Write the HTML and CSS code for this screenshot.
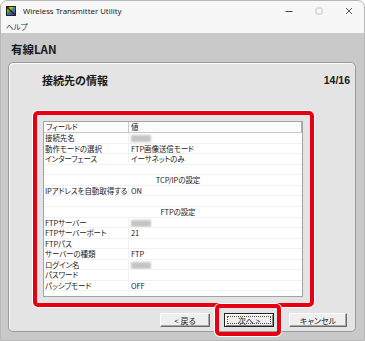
FILE: index.html
```html
<!DOCTYPE html>
<html lang="ja">
<head>
    <meta charset="UTF-8">
    <title>Wireless Transmitter Utility</title>
    <link rel="stylesheet" href="styles.css">
</head>
<body>
    <div class="window">
        <div class="titlebar">
            <svg class="app-icon" width="10" height="10" viewBox="0 0 10 10">
                <defs>
                    <linearGradient id="rainbow" x1="0" y1="0" x2="1" y2="1">
                        <stop offset="0" stop-color="#e02020"/>
                        <stop offset="0.25" stop-color="#f0c000"/>
                        <stop offset="0.45" stop-color="#30b040"/>
                        <stop offset="0.65" stop-color="#2080e0"/>
                        <stop offset="0.85" stop-color="#8030c0"/>
                        <stop offset="1" stop-color="#e040a0"/>
                    </linearGradient>
                </defs>
                <rect width="10" height="10" fill="#222"/>
                <polygon points="2,1 9,1 9,8" fill="url(#rainbow)"/>
                <polygon points="1,2 1,9 8,9" fill="url(#rainbow)" opacity="0.8"/>
            </svg>
            <span class="title">Wireless Transmitter Utility</span>
            <div class="controls">
                <span class="ctrl">
                    <svg width="8" height="8" viewBox="0 0 8 8"><line x1="0.5" y1="4.5" x2="7.5" y2="4.5" stroke="#444" stroke-width="1"/></svg>
                </span>
                <span class="ctrl">
                    <svg width="8" height="8" viewBox="0 0 8 8"><rect x="1" y="1" width="6" height="6" rx="1" fill="none" stroke="#c4c4c4" stroke-width="1"/></svg>
                </span>
                <span class="ctrl">
                    <svg width="8" height="8" viewBox="0 0 8 8"><path d="M1 1 L7 7 M7 1 L1 7" stroke="#444" stroke-width="0.9"/></svg>
                </span>
            </div>
        </div>

        <div class="menubar"><span>ヘルプ</span></div>

        <div class="content">
            <h1 class="page-title">有線LAN</h1>

            <div class="panel">
                <div class="panel-head">
                    <h2>接続先の情報</h2>
                    <span class="step">14/16</span>
                </div>

                <div class="list-wrap">
                    <div class="list">
                        <div class="list-header">
                            <div>フィールド</div>
                            <div>値</div>
                        </div>
                        <div class="row"><div>接続先名</div><div><span class="masked"></span></div></div>
                        <div class="row"><div>動作モードの選択</div><div>FTP画像送信モード</div></div>
                        <div class="row"><div>インターフェース</div><div>イーサネットのみ</div></div>
                        <div class="row blank"></div>
                        <div class="row section">TCP/IPの設定</div>
                        <div class="row"><div>IPアドレスを自動取得する</div><div>ON</div></div>
                        <div class="row blank"></div>
                        <div class="row section">FTPの設定</div>
                        <div class="row"><div>FTPサーバー</div><div><span class="masked"></span></div></div>
                        <div class="row"><div>FTPサーバーポート</div><div>21</div></div>
                        <div class="row"><div>FTPパス</div><div></div></div>
                        <div class="row"><div>サーバーの種類</div><div>FTP</div></div>
                        <div class="row"><div>ログイン名</div><div><span class="masked"></span></div></div>
                        <div class="row"><div>パスワード</div><div></div></div>
                        <div class="row"><div>パッシブモード</div><div>OFF</div></div>
                    </div>
                </div>

                <div class="buttons">
                    <button class="btn btn-back">&lt; 戻る</button>
                    <span class="next-mark">
                        <button class="btn btn-next"><span class="focus">次へ &gt;</span></button>
                    </span>
                    <button class="btn btn-cancel">キャンセル</button>
                </div>
            </div>
        </div>
    </div>
</body>
</html>
```

FILE: styles.css
```css
* {
    margin: 0;
    padding: 0;
    box-sizing: border-box;
}

body {
    width: 365px;
    height: 341px;
    background: #fff;
    font-family: "Noto Sans CJK JP", "Noto Sans", sans-serif;
    color: #1a1a1a;
    overflow: hidden;
}

.window {
    width: 365px;
    height: 341px;
    border: 1px solid #b8b8b8;
    border-radius: 7px 7px 0 0;
    overflow: hidden;
    display: flex;
    flex-direction: column;
    background: #f7f7f7;
}

/* Title bar */
.titlebar {
    height: 19px;
    display: flex;
    align-items: center;
    padding-left: 5px;
}

.app-icon {
    display: block;
    margin-right: 7px;
}

.title {
    font-family: "Noto Sans", sans-serif;
    font-size: 7.8px;
    color: #222;
}

.controls {
    margin-left: auto;
    display: flex;
    height: 100%;
}

.ctrl {
    width: 30px;
    display: flex;
    align-items: center;
    justify-content: center;
}

.menubar {
    height: 13px;
    font-size: 7.5px;
    line-height: 13px;
    padding-left: 5px;
    color: #333;
    font-feature-settings: "palt";
}

/* Main area */
.content {
    flex: 1;
    background: #c9c9c9;
    padding: 0 8px 8px 7px;
    display: flex;
    flex-direction: column;
}

.page-title {
    height: 29px;
    padding: 9px 0 0 3px;
    font-size: 11.5px;
    line-height: 14px;
    font-weight: bold;
    color: #1a1a1a;
}

.panel {
    height: 270px;
    background: #e4e4e4;
    border: 1px solid #9a9a9a;
    border-radius: 5px;
    box-shadow: inset 1px 1px 0 #fafafa;
}

.panel-head {
    height: 48px;
    padding: 10px 5px 0 33px;
    display: flex;
    justify-content: space-between;
    align-items: flex-start;
}

.panel-head h2 {
    font-size: 11px;
    line-height: 14px;
    font-weight: bold;
}

.step {
    font-family: "Liberation Sans", sans-serif;
    font-size: 10.5px;
    line-height: 14px;
    font-weight: bold;
}

/* Highlighted list */
.list-wrap {
    margin-left: 24px;
    width: 281px;
    height: 196px;
    border: 4px solid #e60012;
    border-radius: 5px;
    padding: 6px 7px 6px 6px;
    box-shadow: 0 0 0 1px #fff;
}

.list {
    height: 176px;
    background: #fff;
    border: 1px solid #a3a3a3;
    font-size: 7.5px;
    letter-spacing: -0.1px;
    font-feature-settings: "palt";
    color: #1a1a1a;
}

.list-header,
.row {
    display: grid;
    grid-template-columns: 85px 1fr;
}

.list-header {
    height: 11px;
    line-height: 10px;
    background: #fbfbfb;
    border-bottom: 1px solid #c8c8c8;
    border-right: 1px solid #b0b0b0;
}

.list-header div {
    padding-left: 2px;
}

.list-header div:first-child {
    border-right: 1px solid #c8c8c8;
}

.row {
    height: 10.57px;
    line-height: 10px;
    border-bottom: 1px solid #f1f1f1;
}

.row div {
    padding-left: 2px;
    white-space: nowrap;
    overflow: hidden;
}

.row div:first-child {
    padding-left: 1px;
    border-right: 1px solid #f1f1f1;
}

.row.section {
    display: block;
    text-align: center;
    padding-left: 10px;
}

.masked {
    display: inline-block;
    width: 20px;
    height: 7px;
    margin-top: 2px;
    background: #c4c4c4;
    filter: blur(0.8px);
    vertical-align: top;
}

/* Buttons */
.buttons {
    margin-top: 6px;
    padding-right: 8px;
    display: flex;
    justify-content: flex-end;
    align-items: center;
}

.btn {
    height: 14px;
    font-family: "Noto Sans CJK JP", sans-serif;
    font-size: 8px;
    font-feature-settings: "palt";
    color: #1a1a1a;
    background: #efefef;
    border: 1px solid;
    border-color: #fff #6a6a6a #6a6a6a #fff;
    box-shadow: inset -1px -1px 0 #a8a8a8;
    line-height: 11px;
}

.btn-back {
    width: 50px;
}

.btn-cancel {
    width: 58px;
    margin-left: 15px;
}

.next-mark {
    position: relative;
    display: block;
    margin-left: 14px;
}

.next-mark::after {
    content: "";
    position: absolute;
    top: -9px;
    bottom: -9px;
    left: -9px;
    right: -7px;
    border: 4px solid #e60012;
    border-radius: 5px;
    box-shadow: 0 0 0 1px #fff;
}

.btn-next {
    display: block;
    width: 50px;
    border: 1px solid #222;
    box-shadow: inset 1px 1px 0 #fff, inset -1px -1px 0 #8a8a8a;
    padding: 2px;
}

.focus {
    display: block;
    height: 8px;
    line-height: 7px;
    border: 1px dotted #555;
}
```
